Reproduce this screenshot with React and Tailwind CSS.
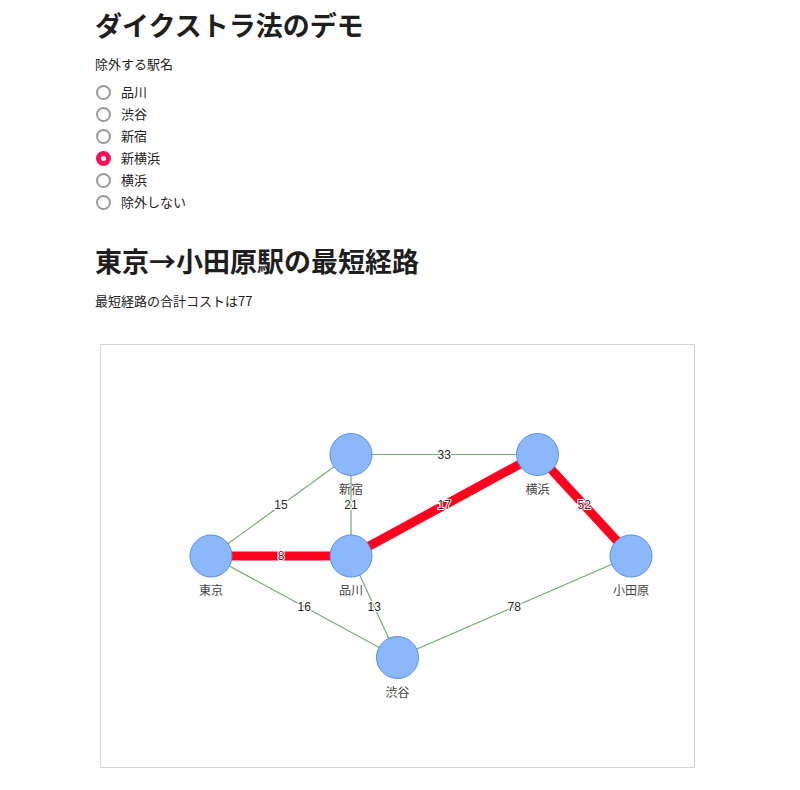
import React, { useState } from "react";

const stations = ["品川", "渋谷", "新宿", "新横浜", "横浜", "除外しない"];

// node positions (page coords, svg viewBox is offset to match)
const nodes = {
  東京: [211, 556],
  品川: [351, 556],
  新宿: [351, 454.5],
  横浜: [537.5, 454.5],
  小田原: [631, 556],
  渋谷: [397.5, 657.5],
};

const edges = [
  ["東京", "新宿", 15],
  ["東京", "渋谷", 16],
  ["品川", "新宿", 21],
  ["品川", "渋谷", 13],
  ["新宿", "横浜", 33],
  ["渋谷", "小田原", 78],
  ["東京", "品川", 8, true],
  ["品川", "横浜", 17, true],
  ["横浜", "小田原", 52, true],
];

const Radio = ({ checked, label, onSelect }) => (
  <label className="flex items-center h-[22px] cursor-pointer" onClick={onSelect}>
    <span
      className={
        checked
          ? "w-[15px] h-[15px] rounded-full bg-[#f5115a] flex items-center justify-center ml-[1px]"
          : "w-[15px] h-[15px] rounded-full border-2 border-[#9a9a9a] bg-white ml-[1px]"
      }
    >
      {checked && <span className="w-[5px] h-[5px] rounded-full bg-white" />}
    </span>
    <span className="ml-[10px] text-[13px] text-[#222]">{label}</span>
  </label>
);

const Graph = () => (
  <svg viewBox="101 345 593 422" className="w-full h-full block">
    {edges.map(([a, b, w, hot]) => {
      const [x1, y1] = nodes[a];
      const [x2, y2] = nodes[b];
      return (
        <line
          key={a + b}
          x1={x1}
          y1={y1}
          x2={x2}
          y2={y2}
          stroke={hot ? "#ff001e" : "#6fae6f"}
          strokeWidth={hot ? 9 : 1.2}
        />
      );
    })}
    {edges.map(([a, b, w]) => {
      const [x1, y1] = nodes[a];
      const [x2, y2] = nodes[b];
      return (
        <text
          key={"l" + a + b}
          x={(x1 + x2) / 2}
          y={(y1 + y2) / 2 + 4}
          textAnchor="middle"
          fontSize="12"
          fill="#2a2a2a"
          stroke="#ffffff"
          strokeWidth="2"
          paintOrder="stroke"
          fontFamily="'Liberation Sans', Arial, sans-serif"
        >
          {w}
        </text>
      );
    })}
    {Object.entries(nodes).map(([name, [x, y]]) => (
      <g key={name}>
        <circle cx={x} cy={y} r="21" fill="#8ab8fa" stroke="#5a8fe6" strokeWidth="1" />
        <text
          x={x}
          y={y + 39}
          textAnchor="middle"
          fontSize="12"
          fill="#444"
          fontFamily="'Noto Sans CJK JP', sans-serif"
        >
          {name}
        </text>
      </g>
    ))}
  </svg>
);

export default function App() {
  const [excluded, setExcluded] = useState("新横浜");

  return (
    <div className="min-h-[790px] bg-white pl-[95px] pt-[4px] font-['Noto_Sans_CJK_JP','Noto_Sans',sans-serif] text-[#222]">
      <h1 className="text-[27px] font-bold leading-[42px] text-[#1e1e1e]">ダイクストラ法のデモ</h1>
      <div className="mt-[8px] text-[13px] leading-[20px]">除外する駅名</div>
      <div className="mt-[7px] flex flex-col">
        {stations.map((s) => (
          <Radio key={s} label={s} checked={excluded === s} onSelect={() => setExcluded(s)} />
        ))}
      </div>
      <h2 className="mt-[27px] text-[27px] font-bold leading-[42px] text-[#1e1e1e]">
        東京→小田原駅の最短経路
      </h2>
      <div className="mt-[9px] text-[13px] leading-[20px]">最短経路の合計コストは77</div>
      <div className="mt-[33px] ml-[5px] w-[595px] h-[424px] border border-[#d4d4d4]">
        <Graph />
      </div>
    </div>
  );
}
